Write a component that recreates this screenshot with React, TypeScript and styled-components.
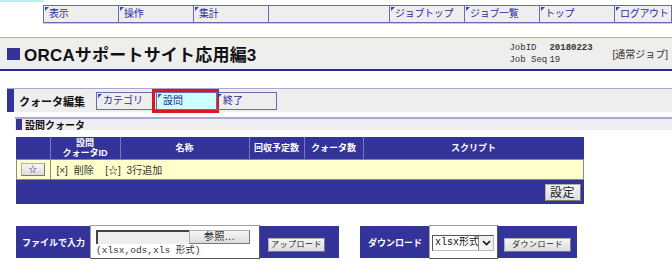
import styled, { createGlobalStyle } from "styled-components";

const GlobalStyle = createGlobalStyle`
  body {
    margin: 0;
    background: #fff;
    font-family: "Liberation Sans", "Noto Sans CJK JP", sans-serif;
    color: #222;
  }
`;

const NAVY = "#333399";
const LINE = "#6a6aae";

const Page = styled.div`
  width: 672px;
  height: 268px;
  overflow: hidden;
`;

const TopAccent = styled.div`
  width: 43px;
  height: 2px;
  background: #b4f0f0;
`;

const Nav = styled.nav`
  margin: 3px 0 0 43px;
  display: grid;
  grid-template-columns: 75px 75px 75px 121px 75px 75px 75px 1fr;
  height: 16px;
  border: 1px solid ${LINE};
  border-right: none;
  background: #eeeeee;
  box-shadow: 0 1px 0 #c8c8e0;
`;

const NavItem = styled.a<{ $mark?: boolean }>`
  position: relative;
  border-right: 1px solid ${LINE};
  padding-left: 5px;
  font-size: 10px;
  letter-spacing: -0.3px;
  line-height: 16px;
  color: #2a2a99;
  text-decoration: none;
  white-space: nowrap;
  overflow: hidden;

  &::before {
    content: "";
    position: absolute;
    top: 1px;
    left: 1px;
    border-top: 4px solid #3344cc;
    border-right: 4px solid transparent;
    display: ${(p) => (p.$mark === false ? "none" : "block")};
  }
`;

const TitleBar = styled.header`
  margin-top: 14px;
  height: 31px;
  display: flex;
  align-items: center;
  padding-left: 7px;
  background: #eeeeee;
  border-top: 1px solid #a8a8d0;
  border-bottom: 2px solid #2a2a8a;
`;

const TitleMark = styled.span`
  width: 13px;
  height: 12px;
  background: ${NAVY};
  margin-top: 1px;
`;

const Title = styled.h1`
  flex: 1;
  margin: 0 0 0 4px;
  font-size: 17px;
  font-weight: bold;
  color: #111;
  letter-spacing: 0.2px;
`;

const JobInfo = styled.div`
  display: grid;
  grid-template-columns: 40px auto;
  font-family: "Liberation Mono", "Noto Sans CJK JP", monospace;
  font-size: 9px;
  line-height: 12px;
  color: #333;
  width: 103px;
`;

const JobValue = styled.span<{ $bold?: boolean }>`
  font-weight: ${(p) => (p.$bold ? "bold" : "normal")};
`;

const JobType = styled.span`
  font-size: 10px;
  color: #333;
  margin-right: 4px;
`;

const EditBar = styled.div`
  margin: 17px 0 0 7px;
  height: 23px;
  display: flex;
  align-items: center;
  background: #eeeeee;
  border-top: 1px solid #a8a8d0;
`;

const EditMark = styled.span`
  width: 7px;
  align-self: stretch;
  background: ${NAVY};
`;

const EditLabel = styled.span`
  flex-shrink: 0;
  width: 83px;
  padding-left: 5px;
  box-sizing: border-box;
  font-size: 11px;
  font-weight: bold;
  color: #111;
  white-space: nowrap;
`;

const Tab = styled.a<{ $active?: boolean }>`
  position: relative;
  flex-shrink: 0;
  box-sizing: border-box;
  width: 61px;
  height: 18px;
  padding-left: 6px;
  border: 1px solid ${LINE};
  margin-left: -1px;
  font-size: 10px;
  line-height: 16px;
  color: #2a2a99;
  text-decoration: none;
  background: ${(p) => (p.$active ? "#ccffff" : "transparent")};

  &::before {
    content: "";
    position: absolute;
    top: 1px;
    left: 1px;
    border-top: 4px solid #3344cc;
    border-right: 4px solid transparent;
  }

  &::after {
    content: "";
    display: ${(p) => (p.$active ? "block" : "none")};
    position: absolute;
    top: -4px;
    bottom: -4px;
    left: -5px;
    right: -3px;
    border: 3px solid #e0141e;
  }
`;

const SectionBar = styled.div`
  margin: 5px 0 0 15px;
  height: 11px;
  display: flex;
  align-items: center;
  background: #eeeeee;
  border-top: 2px solid #a8a8d0;
`;

const SectionMark = styled.span`
  width: 6px;
  align-self: stretch;
  background: ${NAVY};
  margin-left: 1px;
`;

const SectionTitle = styled.span`
  margin-left: 3px;
  font-size: 10px;
  font-weight: bold;
  color: #111;
`;

const Table = styled.table`
  margin: 7px 0 0 16px;
  width: 562px;
  border-collapse: collapse;
  table-layout: fixed;
  background: ${NAVY};
`;

const Th = styled.th<{ $w: number }>`
  width: ${(p) => p.$w}px;
  height: 22px;
  padding: 0;
  border-left: 1px solid #7777bb;
  color: #fff;
  font-size: 9px;
  line-height: 10px;
  font-weight: bold;
  text-align: center;
  &:first-child {
    border-left: none;
  }
`;

const Td = styled.td`
  height: 19px;
  padding: 0;
  background: #ffffcc;
  border: 1px solid #8a8a8a;
  font-size: 10px;
  color: #333;
`;

const ActionCell = styled(Td)`
  padding-left: 6px;
  word-spacing: 3px;
`;

const FootCell = styled.td`
  height: 24px;
  padding: 0 3px 0 0;
  text-align: right;
  vertical-align: middle;
`;

const Button = styled.button<{ $w: number; $h?: number; $size?: number }>`
  box-sizing: border-box;
  width: ${(p) => p.$w}px;
  height: ${(p) => p.$h ?? 14}px;
  padding: 0;
  background: linear-gradient(#f6f6f6, #dcdcdc);
  border: 1px solid #7a7a7a;
  border-top-color: #b0b0b0;
  border-left-color: #b0b0b0;
  font-family: "Liberation Sans", "Noto Sans CJK JP", sans-serif;
  font-size: ${(p) => p.$size ?? 8}px;
  line-height: 1;
  color: #222;
  letter-spacing: 0.5px;
  white-space: nowrap;
`;

const StarButton = styled(Button)`
  display: block;
  margin-left: 4px;
`;

const Bottom = styled.div`
  margin: 22px 0 0 16px;
  display: flex;
  align-items: center;
  gap: 21px;
`;

const Panel = styled.div`
  display: flex;
  align-items: center;
  height: 32px;
  background: ${NAVY};
`;

const PanelLabel = styled.span<{ $w: number; $pad: number }>`
  flex-shrink: 0;
  box-sizing: border-box;
  width: ${(p) => p.$w}px;
  padding-left: ${(p) => p.$pad}px;
  color: #fff;
  font-size: 9px;
  font-weight: bold;
  white-space: nowrap;
`;

const WhiteBox = styled.div<{ $w: number }>`
  flex-shrink: 0;
  box-sizing: border-box;
  width: ${(p) => p.$w}px;
  height: 34px;
  background: #fff;
  border: 1px solid #a0a0a0;
  border-right-color: #555;
  border-bottom-color: #555;
  padding: 4px 0 0 ${(p) => (p.$w > 100 ? 5 : 2)}px;
`;

const PanelSlot = styled.div<{ $w: number; $pad: number }>`
  flex-shrink: 0;
  box-sizing: border-box;
  width: ${(p) => p.$w}px;
  padding-left: ${(p) => p.$pad}px;
`;

const FileRow = styled.div`
  display: flex;
  height: 14px;
`;

const FileField = styled.div`
  width: 93px;
  background: #eeeeee;
  border-top: 2px solid #444;
  border-left: 2px solid #444;
  box-sizing: border-box;
`;

const Hint = styled.div`
  margin-top: 1px;
  font-family: "Liberation Mono", "Noto Sans CJK JP", monospace;
  font-size: 9.5px;
  line-height: 11px;
  color: #333;
`;

const Select = styled.div`
  margin-top: 5px;
  box-sizing: border-box;
  width: 62px;
  height: 16px;
  display: flex;
  border: 1px solid #555;
  border-right-color: #bbb;
  border-bottom-color: #bbb;
  background: #fff;
`;

const SelectText = styled.span`
  flex: 1;
  padding-left: 2px;
  font-family: "Liberation Mono", "Noto Sans CJK JP", monospace;
  font-size: 10px;
  line-height: 14px;
  color: #111;
  white-space: nowrap;
  overflow: hidden;
`;

const SelectArrow = styled.span`
  width: 14px;
  display: flex;
  align-items: center;
  justify-content: center;
  border-left: 1px solid #888;
  background: #f0f0f0;
`;

const headers: [string, number][] = [
  ["", 33],
  ["設問\nクォータID", 69],
  ["名称", 128],
  ["回収予定数", 54],
  ["クォータ数", 58],
  ["スクリプト", 220],
];

const navItems = ["表示", "操作", "集計", "", "ジョブトップ", "ジョブ一覧", "トップ", "ログアウト"];

export default function App() {
  return (
    <Page>
      <GlobalStyle />
      <TopAccent />
      <Nav>
        {navItems.map((n, i) => (
          <NavItem key={i} $mark={n !== ""}>
            {n}
          </NavItem>
        ))}
      </Nav>

      <TitleBar>
        <TitleMark />
        <Title>ORCAサポートサイト応用編3</Title>
        <JobInfo>
          <span>JobID</span>
          <JobValue $bold>20180223</JobValue>
          <span>Job Seq</span>
          <JobValue>19</JobValue>
        </JobInfo>
        <JobType>[通常ジョブ]</JobType>
      </TitleBar>

      <EditBar>
        <EditMark />
        <EditLabel>クォータ編集</EditLabel>
        <Tab>カテゴリ</Tab>
        <Tab $active>設問</Tab>
        <Tab>終了</Tab>
      </EditBar>

      <SectionBar>
        <SectionMark />
        <SectionTitle>設問クォータ</SectionTitle>
      </SectionBar>

      <Table>
        <thead>
          <tr>
            {headers.map(([h, w], i) => (
              <Th key={i} $w={w}>
                {h.split("\n").map((line, j) => (
                  <div key={j}>{line}</div>
                ))}
              </Th>
            ))}
          </tr>
        </thead>
        <tbody>
          <tr>
            <Td>
              <StarButton $w={24} $h={13} $size={8}>☆</StarButton>
            </Td>
            <ActionCell colSpan={5}>[×] 削除 &nbsp;[☆] 3行追加</ActionCell>
          </tr>
          <tr>
            <FootCell colSpan={6}>
              <Button $w={36} $h={17} $size={12}>設定</Button>
            </FootCell>
          </tr>
        </tbody>
      </Table>

      <Bottom>
        <Panel>
          <PanelLabel $w={74} $pad={6}>ファイルで入力</PanelLabel>
          <WhiteBox $w={170}>
            <FileRow>
              <FileField />
              <Button $w={61} $size={10}>参照...</Button>
            </FileRow>
            <Hint>(xlsx,ods,xls 形式)</Hint>
          </WhiteBox>
          <PanelSlot $w={79} $pad={8}>
            <Button $w={57}>アップロード</Button>
          </PanelSlot>
        </Panel>

        <Panel>
          <PanelLabel $w={69} $pad={8}>ダウンロード</PanelLabel>
          <WhiteBox $w={69}>
            <Select>
              <SelectText>xlsx形式</SelectText>
              <SelectArrow>
                <svg width="9" height="6" viewBox="0 0 9 6">
                  <path d="M1 1 L4.5 4.5 L8 1" fill="none" stroke="#111" strokeWidth="1.6" />
                </svg>
              </SelectArrow>
            </Select>
          </WhiteBox>
          <PanelSlot $w={79} $pad={6}>
            <Button $w={67}>ダウンロード</Button>
          </PanelSlot>
        </Panel>
      </Bottom>
    </Page>
  );
}
